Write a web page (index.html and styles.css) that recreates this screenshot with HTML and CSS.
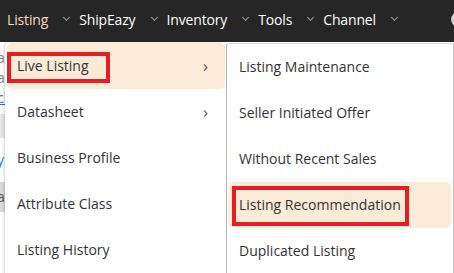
FILE: index.html
```html
<!DOCTYPE html>
<html>
<head>
<meta charset="utf-8">
<link rel="stylesheet" href="styles.css">
</head>
<body>
<nav class="topbar">
  <div class="nav-item active"><span>Listing</span><i class="chev"></i></div>
  <div class="nav-item"><span>ShipEazy</span><i class="chev"></i></div>
  <div class="nav-item"><span>Inventory</span><i class="chev"></i></div>
  <div class="nav-item"><span>Tools</span><i class="chev"></i></div>
  <div class="nav-item"><span>Channel</span><i class="chev"></i></div>
  <div class="avatar"></div>
</nav>
<main class="page">
  <div class="page-content">
    <div class="pc-line gray">ar</div>
    <div class="pc-line gray">a</div>
    <div class="pc-line link">ck</div>
    <div class="pc-band"></div>
    <div class="pc-line blue">y</div>
    <div class="pc-band dark">al</div>
  </div>

  <div class="menu menu-main">
    <div class="menu-item hover">Live Listing<span class="arrow">›</span><b class="mark mark-1"></b></div>
    <div class="menu-item">Datasheet<span class="arrow">›</span></div>
    <div class="menu-item">Business Profile</div>
    <div class="menu-item">Attribute Class</div>
    <div class="menu-item">Listing History</div>
  </div>

  <div class="menu menu-sub">
    <div class="menu-item">Listing Maintenance</div>
    <div class="menu-item">Seller Initiated Offer</div>
    <div class="menu-item">Without Recent Sales</div>
    <div class="menu-item hover">Listing Recommendation<b class="mark mark-2"></b></div>
    <div class="menu-item">Duplicated Listing</div>
  </div>
</main>
</body>
</html>
```

FILE: styles.css
```css
* { box-sizing: border-box; }
html, body { margin: 0; padding: 0; }
body {
  width: 454px;
  height: 273px;
  overflow: hidden;
  background: #fff;
  font-family: "Open Sans", "Noto Sans", sans-serif;
}
.topbar {
  height: 42px;
  background: #262626;
  display: flex;
  align-items: center;
  padding-left: 7px;
  position: relative;
  overflow: hidden;
}
.nav-item {
  display: flex;
  align-items: center;
  color: #ffffff;
  font-size: 14px;
  letter-spacing: -0.15px;
  margin-right: 10px;
  height: 42px;
  padding-bottom: 4px;
}
.nav-item.active { color: #f5dcb8; }
.chev {
  display: inline-block;
  width: 5px;
  height: 5px;
  border-right: 1.2px solid #9a9a9a;
  border-bottom: 1.2px solid #9a9a9a;
  transform: rotate(45deg);
  margin-left: 16px;
  margin-top: -3px;
}
.avatar {
  position: absolute;
  left: 451px;
  top: 12px;
  width: 15px;
  height: 15px;
  border-radius: 50%;
  background: #d0d0d0;
}
.page {
  position: relative;
  height: 231px;
}
.page-content {
  padding-top: 6px;
  font-size: 14px;
  color: #888;
}
.pc-line { height: 20px; line-height: 20px; margin-left: -3px; }
.pc-line.link { color: #2a6fd1; text-decoration: underline; }
.pc-line.blue { color: #3a7bd5; margin-top: 12px; }
.pc-band { height: 24px; background: #e6e6e6; margin-top: 6px; }
.pc-band.dark { margin-top: 12px; height: 30px; color: #555; line-height: 30px; background: #d9d9d9; text-indent: -3px; }

.menu {
  position: absolute;
  top: 1px;
  background: #fff;
  padding: 0 2px;
  font-size: 14px;
  color: #333;
}
.menu-main {
  left: 5px;
  width: 222px;
  height: 240px;
  border-radius: 4px;
  box-shadow: -1px 0 3px rgba(0,0,0,0.18);
}
.menu-sub {
  left: 226px;
  width: 228px;
  height: 240px;
  border-left: 1.5px solid #b5b5b5;
  border-right: 1.5px solid #c6c6c6;
  border-top: 1px solid #ddd;
  border-top-left-radius: 3px;
}
.menu-item {
  position: relative;
  height: 46px;
  display: flex;
  align-items: center;
  padding-left: 10px;
  padding-bottom: 1px;
  border-radius: 5px;
}
.menu-item.hover { background: #faebd7; }
.arrow {
  position: absolute;
  right: 17px;
  top: 11px;
  font-size: 17px;
  color: #555;
}
.mark {
  position: absolute;
  border: 4px solid #e51e25;
}
.mark-1 { left: 0; top: 9px; width: 103px; height: 31px; }
.mark-2 { left: 3px; top: 4px; width: 177px; height: 40px; }
```
